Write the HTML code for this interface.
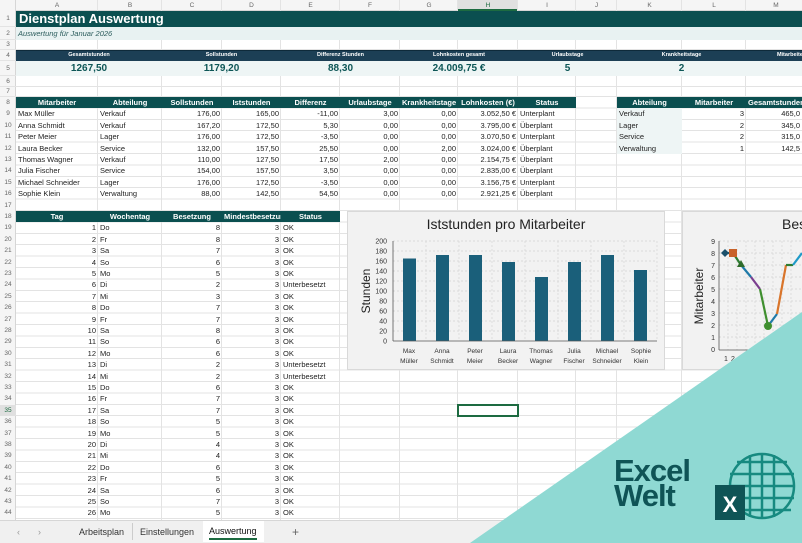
<!DOCTYPE html>
<html><head><meta charset="utf-8">
<style>
*{margin:0;padding:0;box-sizing:border-box}
body{width:802px;height:543px;overflow:hidden;background:#fff;font-family:"Liberation Sans",sans-serif;position:relative;font-size:7.5px;color:#222}
.abs{position:absolute}
.vl{position:absolute;top:0;width:1px;height:520px;background:#e3e3e3}
.hl{position:absolute;left:0;width:802px;height:1px;background:#e3e3e3}
.ch{position:absolute;top:0;height:11px;line-height:11px;text-align:center;color:#666;font-size:6.5px}
.rn{position:absolute;left:0;width:16px;text-align:center;color:#666;font-size:6.5px;height:11.4px;line-height:11.4px}
.r{position:absolute;left:0;width:802px;height:11.4px;line-height:11.4px;white-space:nowrap}
.r i{position:absolute;font-style:normal;padding:0 2px;overflow:hidden}
.a{left:16px;width:82px}.b{left:98px;width:64px}.c{left:162px;width:60px}.d{left:222px;width:59px}.e{left:281px;width:59px}.f{left:340px;width:60px}.g{left:400px;width:58px}.h{left:458px;width:60px}.ii{left:518px;width:58px}.k{left:617px;width:65px}.l{left:682px;width:64px}.m{left:746px;width:60px}
.mv{left:746px;width:56px;text-align:right}
.R{text-align:right}.C{text-align:center}
.hd{color:#fff;font-weight:bold;text-align:center}
</style></head><body>
<div class="abs" style="left:0;top:0;width:802px;height:11px;background:#f5f5f5;border-bottom:1px solid #d6d6d6"></div>
<div class="abs" style="left:458px;top:0;width:60px;height:11px;background:#e0e0e0;border-bottom:2px solid #1d6b41"></div>
<div class="abs" style="left:0;top:0;width:16px;height:520px;background:#f5f5f5;border-right:1px solid #d6d6d6"></div>
<div class="ch" style="left:16px;width:82px">A</div><div class="ch" style="left:98px;width:64px">B</div><div class="ch" style="left:162px;width:60px">C</div><div class="ch" style="left:222px;width:59px">D</div><div class="ch" style="left:281px;width:59px">E</div><div class="ch" style="left:340px;width:60px">F</div><div class="ch" style="left:400px;width:58px">G</div><div class="ch" style="left:458px;width:60px;color:#1d6b41">H</div><div class="ch" style="left:518px;width:58px">I</div><div class="ch" style="left:576px;width:41px">J</div><div class="ch" style="left:617px;width:65px">K</div><div class="ch" style="left:682px;width:64px">L</div><div class="ch" style="left:746px;width:60px">M</div>
<div class="abs" style="left:16px;top:97px;width:786px;height:423px;background:repeating-linear-gradient(to bottom,transparent 0 10.4px,#e3e3e3 10.4px 11.4px)"></div>
<div class="hl" style="top:26px"></div><div class="hl" style="top:39px"></div><div class="hl" style="top:49px"></div><div class="hl" style="top:60px"></div><div class="hl" style="top:75px"></div><div class="hl" style="top:86px"></div><div class="hl" style="top:96px"></div>
<div class="vl" style="left:97px"></div><div class="vl" style="left:161px"></div><div class="vl" style="left:221px"></div><div class="vl" style="left:280px"></div><div class="vl" style="left:339px"></div><div class="vl" style="left:399px"></div><div class="vl" style="left:457px"></div><div class="vl" style="left:517px"></div><div class="vl" style="left:575px"></div><div class="vl" style="left:616px"></div><div class="vl" style="left:681px"></div><div class="vl" style="left:745px"></div>
<div class="abs" style="left:16px;top:11px;width:786px;height:16px;background:#0b4f50"></div>
<div class="abs" style="left:16px;top:27px;width:786px;height:13px;background:#e8f2f2"></div>
<div class="abs" style="left:16px;top:50px;width:786px;height:11px;background:#1c3f55;border-top:1px solid #0e2a3a"></div>
<div class="abs" style="left:16px;top:61px;width:786px;height:15px;background:#eef5f5"></div>
<div class="abs" style="left:16px;top:97px;width:560px;height:11.4px;background:#0b4f50"></div>
<div class="abs" style="left:617px;top:97px;width:185px;height:11.4px;background:#0b4f50"></div>
<div class="abs" style="left:617px;top:108.4px;width:65px;height:45.6px;background:#eef5f5"></div>
<div class="abs" style="left:16px;top:211px;width:324px;height:11.4px;background:#0b4f50"></div>
<div class="abs" style="left:19px;top:11px;height:16px;line-height:16px;color:#fff;font-weight:bold;font-size:13px">Dienstplan Auswertung</div>
<div class="abs" style="left:18px;top:27px;height:13px;line-height:13px;color:#2c5d5d;font-style:italic;font-size:7.5px">Auswertung für Januar 2026</div>
<div class="r" style="top:50px;height:11px;line-height:11px;font-size:5.5px;color:#fff;font-weight:bold">
<i style="left:16px;width:146px" class="C">Gesamtstunden</i><i style="left:162px;width:119px" class="C">Sollstunden</i><i style="left:281px;width:119px" class="C">Differenz Stunden</i><i style="left:400px;width:118px" class="C">Lohnkosten gesamt</i><i style="left:518px;width:99px" class="C">Urlaubstage</i><i style="left:617px;width:129px" class="C">Krankheitstage</i><i style="left:746px;width:90px" class="C">Mitarbeiter</i></div>
<div class="r" style="top:61px;height:15px;line-height:15px;font-size:10px;color:#0d5656;font-weight:bold">
<i style="left:16px;width:146px" class="C">1267,50</i><i style="left:162px;width:119px" class="C">1179,20</i><i style="left:281px;width:119px" class="C">88,30</i><i style="left:400px;width:118px" class="C">24.009,75 €</i><i style="left:518px;width:99px" class="C">5</i><i style="left:617px;width:129px" class="C">2</i></div>
<div class="rn" style="top:11px;height:16px;line-height:16px">1</div><div class="rn" style="top:27px;height:13px;line-height:13px">2</div><div class="rn" style="top:40px;height:10px;line-height:10px">3</div><div class="rn" style="top:50px;height:11px;line-height:11px">4</div><div class="rn" style="top:61px;height:15px;line-height:15px">5</div><div class="rn" style="top:76px;height:11px;line-height:11px">6</div><div class="rn" style="top:87px;height:10px;line-height:10px">7</div>
<div class="rn" style="top:97px">8</div><div class="rn" style="top:108.4px">9</div><div class="rn" style="top:119.8px">10</div><div class="rn" style="top:131.2px">11</div><div class="rn" style="top:142.6px">12</div><div class="rn" style="top:154px">13</div><div class="rn" style="top:165.4px">14</div><div class="rn" style="top:176.8px">15</div><div class="rn" style="top:188.2px">16</div><div class="rn" style="top:199.6px">17</div><div class="rn" style="top:211px">18</div><div class="rn" style="top:222.4px">19</div><div class="rn" style="top:233.8px">20</div><div class="rn" style="top:245.2px">21</div><div class="rn" style="top:256.6px">22</div><div class="rn" style="top:268px">23</div><div class="rn" style="top:279.4px">24</div><div class="rn" style="top:290.8px">25</div><div class="rn" style="top:302.2px">26</div><div class="rn" style="top:313.6px">27</div><div class="rn" style="top:325px">28</div><div class="rn" style="top:336.4px">29</div><div class="rn" style="top:347.8px">30</div><div class="rn" style="top:359.2px">31</div><div class="rn" style="top:370.6px">32</div><div class="rn" style="top:382px">33</div><div class="rn" style="top:393.4px">34</div><div class="rn" style="top:404.8px;background:#e0e0e0;color:#1d6b41">35</div><div class="rn" style="top:416.2px">36</div><div class="rn" style="top:427.6px">37</div><div class="rn" style="top:439px">38</div><div class="rn" style="top:450.4px">39</div><div class="rn" style="top:461.8px">40</div><div class="rn" style="top:473.2px">41</div><div class="rn" style="top:484.6px">42</div><div class="rn" style="top:496px">43</div><div class="rn" style="top:507.4px">44</div>
<div class="r hd" style="top:97px"><i class="a C">Mitarbeiter</i><i class="b C">Abteilung</i><i class="c C">Sollstunden</i><i class="d C">Iststunden</i><i class="e C">Differenz</i><i class="f C">Urlaubstage</i><i class="g C">Krankheitstage</i><i class="h C">Lohnkosten (€)</i><i class="ii C">Status</i><i class="k C">Abteilung</i><i class="l C">Mitarbeiter</i><i class="m C">Gesamtstunden</i></div>
<div class="r" style="top:108.4px"><i class="a">Max Müller</i><i class="b">Verkauf</i><i class="c R">176,00</i><i class="d R">165,00</i><i class="e R">-11,00</i><i class="f R">3,00</i><i class="g R">0,00</i><i class="h R">3.052,50 €</i><i class="ii">Unterplant</i><i class="k">Verkauf</i><i class="l R">3</i><i class="mv">465,0</i></div>
<div class="r" style="top:119.8px"><i class="a">Anna Schmidt</i><i class="b">Verkauf</i><i class="c R">167,20</i><i class="d R">172,50</i><i class="e R">5,30</i><i class="f R">0,00</i><i class="g R">0,00</i><i class="h R">3.795,00 €</i><i class="ii">Überplant</i><i class="k">Lager</i><i class="l R">2</i><i class="mv">345,0</i></div>
<div class="r" style="top:131.2px"><i class="a">Peter Meier</i><i class="b">Lager</i><i class="c R">176,00</i><i class="d R">172,50</i><i class="e R">-3,50</i><i class="f R">0,00</i><i class="g R">0,00</i><i class="h R">3.070,50 €</i><i class="ii">Unterplant</i><i class="k">Service</i><i class="l R">2</i><i class="mv">315,0</i></div>
<div class="r" style="top:142.6px"><i class="a">Laura Becker</i><i class="b">Service</i><i class="c R">132,00</i><i class="d R">157,50</i><i class="e R">25,50</i><i class="f R">0,00</i><i class="g R">2,00</i><i class="h R">3.024,00 €</i><i class="ii">Überplant</i><i class="k">Verwaltung</i><i class="l R">1</i><i class="mv">142,5</i></div>
<div class="r" style="top:154px"><i class="a">Thomas Wagner</i><i class="b">Verkauf</i><i class="c R">110,00</i><i class="d R">127,50</i><i class="e R">17,50</i><i class="f R">2,00</i><i class="g R">0,00</i><i class="h R">2.154,75 €</i><i class="ii">Überplant</i></div>
<div class="r" style="top:165.4px"><i class="a">Julia Fischer</i><i class="b">Service</i><i class="c R">154,00</i><i class="d R">157,50</i><i class="e R">3,50</i><i class="f R">0,00</i><i class="g R">0,00</i><i class="h R">2.835,00 €</i><i class="ii">Überplant</i></div>
<div class="r" style="top:176.8px"><i class="a">Michael Schneider</i><i class="b">Lager</i><i class="c R">176,00</i><i class="d R">172,50</i><i class="e R">-3,50</i><i class="f R">0,00</i><i class="g R">0,00</i><i class="h R">3.156,75 €</i><i class="ii">Unterplant</i></div>
<div class="r" style="top:188.2px"><i class="a">Sophie Klein</i><i class="b">Verwaltung</i><i class="c R">88,00</i><i class="d R">142,50</i><i class="e R">54,50</i><i class="f R">0,00</i><i class="g R">0,00</i><i class="h R">2.921,25 €</i><i class="ii">Überplant</i></div>
<div class="r hd" style="top:211px"><i class="a C">Tag</i><i class="b C">Wochentag</i><i class="c C">Besetzung</i><i class="d C">Mindestbesetzung</i><i class="e C">Status</i></div>
<div class="r" style="top:222.4px"><i class="a R">1</i><i class="b">Do</i><i class="c R">8</i><i class="d R">3</i><i class="e">OK</i></div>
<div class="r" style="top:233.8px"><i class="a R">2</i><i class="b">Fr</i><i class="c R">8</i><i class="d R">3</i><i class="e">OK</i></div>
<div class="r" style="top:245.2px"><i class="a R">3</i><i class="b">Sa</i><i class="c R">7</i><i class="d R">3</i><i class="e">OK</i></div>
<div class="r" style="top:256.6px"><i class="a R">4</i><i class="b">So</i><i class="c R">6</i><i class="d R">3</i><i class="e">OK</i></div>
<div class="r" style="top:268px"><i class="a R">5</i><i class="b">Mo</i><i class="c R">5</i><i class="d R">3</i><i class="e">OK</i></div>
<div class="r" style="top:279.4px"><i class="a R">6</i><i class="b">Di</i><i class="c R">2</i><i class="d R">3</i><i class="e">Unterbesetzt</i></div>
<div class="r" style="top:290.8px"><i class="a R">7</i><i class="b">Mi</i><i class="c R">3</i><i class="d R">3</i><i class="e">OK</i></div>
<div class="r" style="top:302.2px"><i class="a R">8</i><i class="b">Do</i><i class="c R">7</i><i class="d R">3</i><i class="e">OK</i></div>
<div class="r" style="top:313.6px"><i class="a R">9</i><i class="b">Fr</i><i class="c R">7</i><i class="d R">3</i><i class="e">OK</i></div>
<div class="r" style="top:325px"><i class="a R">10</i><i class="b">Sa</i><i class="c R">8</i><i class="d R">3</i><i class="e">OK</i></div>
<div class="r" style="top:336.4px"><i class="a R">11</i><i class="b">So</i><i class="c R">6</i><i class="d R">3</i><i class="e">OK</i></div>
<div class="r" style="top:347.8px"><i class="a R">12</i><i class="b">Mo</i><i class="c R">6</i><i class="d R">3</i><i class="e">OK</i></div>
<div class="r" style="top:359.2px"><i class="a R">13</i><i class="b">Di</i><i class="c R">2</i><i class="d R">3</i><i class="e">Unterbesetzt</i></div>
<div class="r" style="top:370.6px"><i class="a R">14</i><i class="b">Mi</i><i class="c R">2</i><i class="d R">3</i><i class="e">Unterbesetzt</i></div>
<div class="r" style="top:382px"><i class="a R">15</i><i class="b">Do</i><i class="c R">6</i><i class="d R">3</i><i class="e">OK</i></div>
<div class="r" style="top:393.4px"><i class="a R">16</i><i class="b">Fr</i><i class="c R">7</i><i class="d R">3</i><i class="e">OK</i></div>
<div class="r" style="top:404.8px"><i class="a R">17</i><i class="b">Sa</i><i class="c R">7</i><i class="d R">3</i><i class="e">OK</i></div>
<div class="r" style="top:416.2px"><i class="a R">18</i><i class="b">So</i><i class="c R">5</i><i class="d R">3</i><i class="e">OK</i></div>
<div class="r" style="top:427.6px"><i class="a R">19</i><i class="b">Mo</i><i class="c R">5</i><i class="d R">3</i><i class="e">OK</i></div>
<div class="r" style="top:439px"><i class="a R">20</i><i class="b">Di</i><i class="c R">4</i><i class="d R">3</i><i class="e">OK</i></div>
<div class="r" style="top:450.4px"><i class="a R">21</i><i class="b">Mi</i><i class="c R">4</i><i class="d R">3</i><i class="e">OK</i></div>
<div class="r" style="top:461.8px"><i class="a R">22</i><i class="b">Do</i><i class="c R">6</i><i class="d R">3</i><i class="e">OK</i></div>
<div class="r" style="top:473.2px"><i class="a R">23</i><i class="b">Fr</i><i class="c R">5</i><i class="d R">3</i><i class="e">OK</i></div>
<div class="r" style="top:484.6px"><i class="a R">24</i><i class="b">Sa</i><i class="c R">6</i><i class="d R">3</i><i class="e">OK</i></div>
<div class="r" style="top:496px"><i class="a R">25</i><i class="b">So</i><i class="c R">7</i><i class="d R">3</i><i class="e">OK</i></div>
<div class="r" style="top:507.4px"><i class="a R">26</i><i class="b">Mo</i><i class="c R">5</i><i class="d R">3</i><i class="e">OK</i></div>
<div class="abs" style="left:457px;top:404px;width:62px;height:12.5px;border:2px solid #1d6b41"></div>
<svg class="abs" style="left:347px;top:211px" width="318" height="159" viewBox="347 211 318 159" font-family="Liberation Sans, sans-serif">
<rect x="347.5" y="211.5" width="317" height="158" fill="#f2f2f2" stroke="#d9d9d9"/>
<text x="506" y="229" font-size="14" text-anchor="middle" fill="#222">Iststunden pro Mitarbeiter</text>
<g stroke="#d4d4d4" stroke-dasharray="2,2" stroke-width="0.7">
<line x1="393" x2="657" y1="241" y2="241"/><line x1="393" x2="657" y1="251" y2="251"/><line x1="393" x2="657" y1="261" y2="261"/><line x1="393" x2="657" y1="271" y2="271"/><line x1="393" x2="657" y1="281" y2="281"/><line x1="393" x2="657" y1="291" y2="291"/><line x1="393" x2="657" y1="301" y2="301"/><line x1="393" x2="657" y1="311" y2="311"/><line x1="393" x2="657" y1="321" y2="321"/><line x1="393" x2="657" y1="331" y2="331"/>
<line x1="426" x2="426" y1="241" y2="341"/><line x1="459" x2="459" y1="241" y2="341"/><line x1="492" x2="492" y1="241" y2="341"/><line x1="525" x2="525" y1="241" y2="341"/><line x1="558" x2="558" y1="241" y2="341"/><line x1="591" x2="591" y1="241" y2="341"/><line x1="624" x2="624" y1="241" y2="341"/><line x1="657" x2="657" y1="241" y2="341"/>
</g>
<g fill="#1a5f7a">
<rect x="403" y="258.5" width="13" height="82.5"/><rect x="436" y="255" width="13" height="86"/><rect x="469" y="255" width="13" height="86"/><rect x="502" y="262" width="13" height="79"/><rect x="535" y="277" width="13" height="64"/><rect x="568" y="262" width="13" height="79"/><rect x="601" y="255" width="13" height="86"/><rect x="634" y="270" width="13" height="71"/>
</g>
<line x1="393" x2="393" y1="241" y2="341" stroke="#555" stroke-width="0.8"/>
<line x1="393" x2="657" y1="341" y2="341" stroke="#555" stroke-width="0.8"/>
<g font-size="7" text-anchor="end" fill="#333">
<text x="387" y="243.5">200</text><text x="387" y="253.5">180</text><text x="387" y="263.5">160</text><text x="387" y="273.5">140</text><text x="387" y="283.5">120</text><text x="387" y="293.5">100</text><text x="387" y="303.5">80</text><text x="387" y="313.5">60</text><text x="387" y="323.5">40</text><text x="387" y="333.5">20</text><text x="387" y="343.5">0</text>
</g>
<text transform="translate(370,291) rotate(-90)" font-size="12" text-anchor="middle" fill="#222">Stunden</text>
<g font-size="6.5" text-anchor="middle" fill="#333">
<text x="409" y="353">Max</text><text x="409" y="363">Müller</text>
<text x="442" y="353">Anna</text><text x="442" y="363">Schmidt</text>
<text x="475" y="353">Peter</text><text x="475" y="363">Meier</text>
<text x="508" y="353">Laura</text><text x="508" y="363">Becker</text>
<text x="541" y="353">Thomas</text><text x="541" y="363">Wagner</text>
<text x="574" y="353">Julia</text><text x="574" y="363">Fischer</text>
<text x="607" y="353">Michael</text><text x="607" y="363">Schneider</text>
<text x="641" y="353">Sophie</text><text x="641" y="363">Klein</text>
</g>
</svg>
<svg class="abs" style="left:682px;top:211px" width="120" height="160" viewBox="682 211 120 160" font-family="Liberation Sans, sans-serif">
<rect x="682.5" y="211.5" width="130" height="158" fill="#f2f2f2" stroke="#d9d9d9"/>
<text x="782" y="229" font-size="14" fill="#222">Bes</text>
<g stroke="#d4d4d4" stroke-dasharray="2,2" stroke-width="0.7">
<line x1="719" x2="802" y1="241" y2="241"/><line x1="719" x2="802" y1="253" y2="253"/><line x1="719" x2="802" y1="265" y2="265"/><line x1="719" x2="802" y1="277" y2="277"/><line x1="719" x2="802" y1="289" y2="289"/><line x1="719" x2="802" y1="301" y2="301"/><line x1="719" x2="802" y1="313" y2="313"/><line x1="719" x2="802" y1="325" y2="325"/><line x1="719" x2="802" y1="337" y2="337"/>
<line x1="728" x2="728" y1="241" y2="350"/><line x1="737" x2="737" y1="241" y2="350"/><line x1="746" x2="746" y1="241" y2="350"/><line x1="755" x2="755" y1="241" y2="350"/><line x1="764" x2="764" y1="241" y2="350"/><line x1="773" x2="773" y1="241" y2="350"/><line x1="782" x2="782" y1="241" y2="350"/><line x1="791" x2="791" y1="241" y2="350"/>
</g>
<line x1="719" x2="719" y1="241" y2="350" stroke="#555" stroke-width="0.8"/>
<line x1="719" x2="802" y1="350" y2="350" stroke="#555" stroke-width="0.8"/>
<g font-size="7" text-anchor="end" fill="#333">
<text x="715" y="244">9</text><text x="715" y="256">8</text><text x="715" y="268">7</text><text x="715" y="280">6</text><text x="715" y="292">5</text><text x="715" y="304">4</text><text x="715" y="316">3</text><text x="715" y="328">2</text><text x="715" y="340">1</text><text x="715" y="352">0</text>
</g>
<text x="724" y="361" font-size="7" fill="#333">1</text><text x="731" y="361" font-size="7" fill="#333">2</text>
<text transform="translate(703,296) rotate(-90)" font-size="12" text-anchor="middle" fill="#222">Mitarbeiter</text>
<g stroke-width="2.2" fill="none">
<line x1="725" y1="253" x2="733" y2="253" stroke="#1a5f7a"/>
<line x1="733" y1="253" x2="741" y2="265" stroke="#2e7d32"/>
<line x1="741" y1="265" x2="751" y2="277" stroke="#1f7aa8"/>
<line x1="751" y1="277" x2="760" y2="289" stroke="#7b3f8f"/>
<line x1="760" y1="289" x2="768" y2="326" stroke="#3f8f2f"/>
<line x1="768" y1="326" x2="777" y2="314" stroke="#1f7aa8"/>
<line x1="777" y1="314" x2="786" y2="265" stroke="#d9752b"/>
<line x1="786" y1="265" x2="793" y2="265" stroke="#2e7d32"/>
<line x1="793" y1="265" x2="802" y2="253" stroke="#1f9ac8"/>
</g>
<path d="M725 249l4 4-4 4-4-4z" fill="#1a4f6a"/>
<rect x="729" y="249" width="8" height="8" fill="#c8622a"/>
<path d="M741 260l4 7h-8z" fill="#2e6b2a"/>
<circle cx="768" cy="326" r="4" fill="#3f8f2f"/>
</svg>
<div class="abs" style="left:0;top:520px;width:802px;height:23px;background:#f0f0f0;border-top:1px solid #d6d6d6;font-size:9px;color:#333">
<span class="abs" style="left:17px;top:6px;color:#999">‹</span><span class="abs" style="left:38px;top:6px;color:#999">›</span>
<span class="abs" style="left:79px;top:6px">Arbeitsplan</span>
<span class="abs" style="left:132px;top:2px;width:1px;height:17px;background:#ccc"></span>
<span class="abs" style="left:140px;top:6px">Einstellungen</span>
<span class="abs" style="left:203px;top:0;width:61px;height:21px;background:#fff"></span>
<span class="abs" style="left:209px;top:5px;color:#111">Auswertung</span>
<span class="abs" style="left:209px;top:17px;width:48px;height:2px;background:#1d6b41"></span>
<span class="abs" style="left:292px;top:4px;font-size:12px;color:#666">+</span>
</div>
<svg class="abs" style="left:0;top:0" width="802" height="543">
<polygon points="470,543 802,312 802,543" fill="#8fd9d3"/>
<text x="614" y="481" font-size="31" font-weight="bold" fill="#0f5456" font-family="Liberation Sans, sans-serif" letter-spacing="-1">Excel</text>
<text x="614" y="506" font-size="31" font-weight="bold" fill="#0f5456" font-family="Liberation Sans, sans-serif" letter-spacing="-1">Welt</text>
<g stroke="#178a80" stroke-width="2.5" fill="none">
<circle cx="762" cy="486" r="32"/>
<line x1="730" y1="474" x2="794" y2="474"/><line x1="730" y1="486" x2="794" y2="486"/><line x1="730" y1="498" x2="794" y2="498"/><line x1="733" y1="510" x2="791" y2="510"/><line x1="737" y1="462" x2="787" y2="462"/>
<line x1="750" y1="455" x2="750" y2="517"/><line x1="762" y1="454" x2="762" y2="518"/><line x1="774" y1="455" x2="774" y2="517"/>
</g>
<rect x="715" y="485" width="30" height="35" fill="#0f5456"/>
<text x="730" y="512" font-size="22" font-weight="bold" fill="#fff" text-anchor="middle" font-family="Liberation Sans, sans-serif">X</text>
</svg>
</body></html>
